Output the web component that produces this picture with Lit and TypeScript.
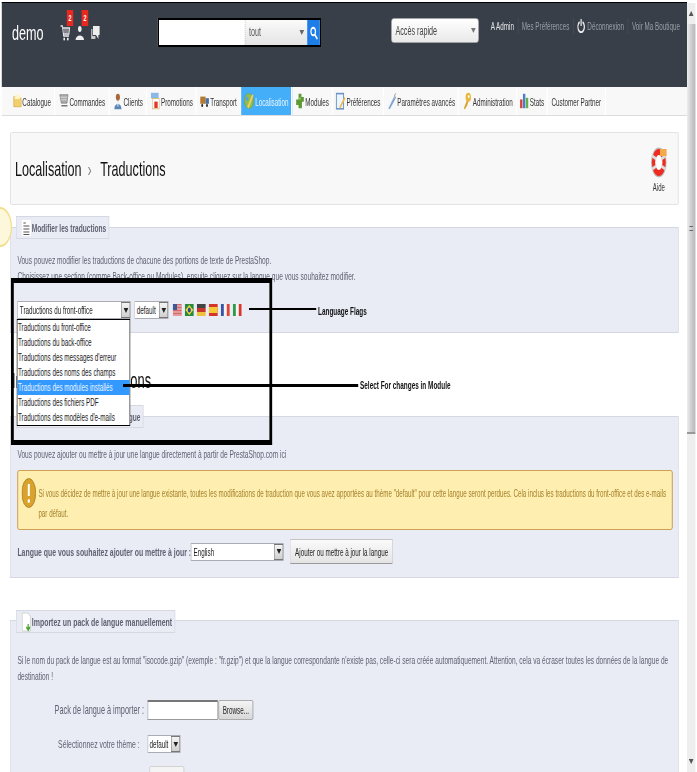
import { LitElement, html, css, svg } from "lit";
import { customElement } from "lit/decorators.js";

const I = (w: number, h: number, body: unknown, k = 1) =>
  html`<svg class="ic" width=${w * k} height=${h * k} viewBox="0 0 ${w} ${h}">${body}</svg>`;

const menu = [
  { t: "Catalogue", w: 75, i: I(17, 16, svg`<path d="M1 3h6l2 2h7v10H1z" fill="#f3cf6b" stroke="#cfa23c"/><rect x="3" y="1" width="10" height="5" fill="#fff4c4"/>`, 0.85) },
  { t: "Commandes", w: 91, i: I(20, 18, svg`<path d="M2 2h16l-2 10H5z" fill="#aaa" stroke="#777"/><path d="M5 14h12v2H5z" fill="#777"/><path d="M3 5h14M4 8h12" stroke="#eee"/>`, 0.85) },
  { t: "Clients", w: 62, i: I(20, 20, svg`<circle cx="10" cy="5" r="4" fill="#a8683a"/><path d="M3 19c0-8 14-8 14 0z" fill="#5b86b8"/><path d="M9 10h2v6H9z" fill="#e2e8f0"/>`, 0.85) },
  { t: "Promotions", w: 83, i: I(22, 22, svg`<rect x="2" y="1" width="16" height="7" fill="#8cb7e6"/><rect x="5" y="8" width="14" height="13" fill="#fff" stroke="#d8b060"/><rect x="9" y="12" width="7" height="8" fill="#e3352a"/>`, 0.8) },
  { t: "Transport", w: 74, i: I(20, 16, svg`<rect x="1" y="2" width="11" height="9" fill="#b57a2e"/><rect x="12" y="4" width="7" height="7" fill="#4a6fa8"/><circle cx="5" cy="13" r="2" fill="#333"/><circle cx="15" cy="13" r="2" fill="#333"/>`, 0.8) },
  { t: "Localisation", w: 85, on: true, i: I(24, 24, svg`<circle cx="12" cy="12" r="10" fill="#8fbf4d" stroke="#7a9a3a"/><path d="M8 20L19 3l3 2L11 22z" fill="#f2cf62"/><circle cx="8" cy="9" r="3" fill="#5ea0d8"/>`, 0.75) },
  { t: "Modules", w: 68, i: I(20, 20, svg`<path d="M7 1h6v4h5v6h-4v8H7v-4H2V8h5z" fill="#5d9a35"/><circle cx="10" cy="7" r="2" fill="#88c25c"/>`, 0.8) },
  { t: "Préférences", w: 85, i: I(22, 22, svg`<rect x="2" y="2" width="15" height="19" fill="#eef4fb" stroke="#6a94c8" stroke-width="2"/><path d="M8 19L19 6l2 2L10 21z" fill="#eab94a"/>`, 0.8) },
  { t: "Paramètres avancés", w: 125, i: I(22, 24, svg`<path d="M3 22l12-15 3 3L6 23z" fill="#7fa3d8"/><path d="M15 8c0-4 3-7 6-6l-3 3 3 3c-2 2-4 2-6 0z" fill="#aab5c4"/>`, 0.75) },
  { t: "Administration", w: 97, i: I(22, 24, svg`<circle cx="14" cy="7" r="6" fill="#eab83a"/><circle cx="15" cy="6" r="2" fill="#fff"/><path d="M11 11L4 22l3 1 2-3 2-1 3-6z" fill="#d9a228"/>`, 0.75) },
  { t: "Stats", w: 51, i: I(20, 20, svg`<rect x="1" y="8" width="5" height="11" fill="#d8423a"/><rect x="7" y="1" width="5" height="18" fill="#4a7fd0"/><rect x="13" y="6" width="5" height="13" fill="#64ae4c"/>`, 0.8) },
  { t: "Customer Partner", w: 97, i: null },
];

const flags = [
  svg`<rect width="15" height="12" fill="#d66"/><path d="M0 2h15M0 5h15M0 8h15M0 11h15" stroke="#eee"/><rect width="7" height="6" fill="#3c5a9a"/>`,
  svg`<rect width="15" height="12" fill="#2a8a3a"/><path d="M7.5 1L14 6l-6.5 5L1 6z" fill="#f2d83a"/><circle cx="7.5" cy="6" r="2.6" fill="#2a4a9a"/>`,
  svg`<rect width="15" height="4" fill="#444"/><rect y="4" width="15" height="4" fill="#c8352a"/><rect y="8" width="15" height="4" fill="#eec23a"/>`,
  svg`<rect width="15" height="12" fill="#d5342a"/><rect y="3" width="15" height="6" fill="#f6c93a"/>`,
  svg`<rect width="15" height="12" fill="#f4f4f4"/><rect width="5" height="12" fill="#3a55a5"/><rect x="10" width="5" height="12" fill="#e0443a"/>`,
  svg`<rect width="15" height="12" fill="#f4f4f4"/><rect width="5" height="12" fill="#2f9a48"/><rect x="10" width="5" height="12" fill="#d8342a"/>`,
];

const options = [
  "Traductions du front-office",
  "Traductions du back-office",
  "Traductions des messages d'erreur",
  "Traductions des noms des champs",
  "Traductions des modules installés",
  "Traductions des fichiers PDF",
  "Traductions des modèles d'e-mails",
];

const arrow = html`<span class="arr"><svg width="8" height="5" viewBox="0 0 8 5"><path d="M0 0h8L4 5z" fill="#222"/></svg></span>`;

@customElement("app-root")
export class AppRoot extends LitElement {
  static styles = css`
    :host { display: block; width: 697px; height: 772px; overflow: hidden; position: relative; background: #fff; }
    * { box-sizing: border-box; }
    .stage { width: 1162px; height: 772px; transform: scaleX(0.6); transform-origin: 0 0; display: flex; position: relative;
      font-family: "Liberation Sans", Arial, sans-serif; font-size: 10.5px; color: #5f6272; filter: blur(0.3px); }
    .main { width: 1145px; flex: none; }
    .ic { display: block; flex: none; }

    .top { margin: 2px 0 0 3px; height: 85px; border-top: 1px solid #000; background: #383f49; display: flex; align-items: flex-start; padding: 15px 0 0 17px; }
    .top > * { flex: none; }
    .demo { width: 80px; font-size: 21px; line-height: 30px; color: #fff; }
    .notif { width: 163px; display: flex; gap: 8px; padding-top: 7px; }
    .nt { position: relative; }
    .badge { position: absolute; top: -15px; left: 11px; width: 11px; height: 16px; background: #e8291f; color: #fff; font-size: 9px; font-weight: 700; text-align: center; line-height: 16px; }
    .search { width: 272px; height: 29px; border: 2px solid #000; display: flex; background: #fff; margin-right: 117px; }
    .search .q { width: 143px; }
    .search .in { width: 104px; padding: 0 5px 0 6px; font-size: 12px; line-height: 25px; display: flex; justify-content: space-between; align-items: center; color: #555; background: linear-gradient(#fafafa, #e4e4e4); border-left: 1px dotted #bbb; }
    .search .go { flex: 1; background: #1c7ee6; display: flex; align-items: center; justify-content: center; }
    .quick { width: 146px; height: 25px; border-radius: 4px; background: linear-gradient(#fff, #e9e9e9); border: 1px solid #bbb; display: flex; align-items: center; justify-content: space-between; padding: 0 4px 0 6px; font-size: 12px; color: #444; }
    .links { margin-left: 20px; display: flex; font-size: 10.5px; line-height: 16px; color: #9a9ea6; align-items: center; }
    .links span { padding: 0 6px; border-left: 1px solid #4c535d; display: flex; align-items: center; gap: 4px; white-space: nowrap; }
    .links span:first-child { border: 0; padding-left: 0; color: #e6e6e6; }

    .menu { margin-left: 3px; height: 29px; background: #f8f8f8; border-bottom: 1px solid #ddd; display: flex; padding-left: 14px; }
    .mi { height: 28px; flex: none; border-right: 2px solid #fff; display: flex; align-items: center; justify-content: center; gap: 1px; color: #333; font-size: 10.5px; white-space: nowrap; }
    .mi span { padding-top: 2px; }
    .mi.on { background: #45aef8; color: #e8f5ff; }

    .hdr { margin: 16px 14px 0 17px; height: 73px; background: #f8f8f8; border: 1px solid #ddd; border-radius: 2px; display: flex; justify-content: space-between; align-items: center; padding: 0 18px 0 7px; color: #111; }
    .crumb { font-size: 21px; display: flex; align-items: center; gap: 10px; }
    .crumb i { font-style: normal; color: #888; margin-right: 4px; }
    .aide { display: flex; flex-direction: column; align-items: center; font-size: 10px; color: #333; gap: 4px; margin-top: 2px; }

    .sec { margin: 22px 14px 0 17px; background: #e9ecf4; border: 1px solid #d5d8e2; padding: 0 11px; }
    .s1 { height: 106px; }
    .s2 { height: 162px; margin-top: 0; }
    .s3 { height: 240px; margin-top: 42px; }
    .leg { display: flex; width: fit-content; align-items: center; gap: 1px; height: 23px; margin: -12px 0 0 -2px; padding: 0 4px 0 8px; background: #e9ecf4; border: 1px solid #d5d8e2; font-size: 11px; font-weight: 700; color: #5f6272; }
    p { margin: 0; line-height: 16px; font-size: 11px; }
    .s1 p { margin-top: 13px; }
    .row1 { display: flex; align-items: center; margin-top: 17px; height: 18px; }
    .sel { display: flex; align-items: center; justify-content: space-between; background: #fff; border: 1px solid #abadb3; height: 18px; color: #222; padding-left: 3px; white-space: nowrap; }
    .arr { width: 15px; align-self: stretch; background: linear-gradient(#f4f4f4, #cfcfcf); border: 1px solid #777; display: flex; align-items: center; justify-content: center; flex: none; }
    .sel.a { width: 189px; }
    .sel.b { width: 57px; margin-left: 6px; }
    .flags { display: flex; gap: 5px; margin-left: 7px; }

    h2 { margin: 37px 0 24px 20px; height: 22px; font-size: 21.5px; line-height: 22px; font-weight: 400; color: #111; white-space: nowrap; }

    .s2 .leg { width: 212px; justify-content: flex-end; }
    .s2 p { margin-top: 18px; }
    .warn { margin-top: 8px; height: 60px; width: 1092px; background: #feeeb0; border: 1px solid #c58a33; border-radius: 3px; display: flex; color: #a5802a; font-size: 10.4px; line-height: 20px; padding: 13px 2px 0 6px; gap: 4px; }
    .warn svg { margin-top: -6px; }
    .row2 { display: flex; align-items: center; height: 25px; margin-top: 9px; font-weight: 700; font-size: 11.5px; white-space: nowrap; }
    .row2 .sel { width: 155px; margin-left: 0; font-weight: 400; font-size: 10.5px; height: 18px; }
    .btn { height: 25px; background: linear-gradient(#fafafa, #e4e4e4); border: 1px solid #c4c4c4; border-bottom-color: #999; border-radius: 2px; color: #222; font-weight: 400; font-size: 10.5px; display: flex; align-items: center; justify-content: center; }
    .row2 .btn { width: 172px; margin-left: 10px; }

    .s3 p { margin-top: 20px; line-height: 15.5px; }
    .s3 .leg { margin-top: -11px; font-size: 11.6px; }
    .row3 { display: flex; align-items: center; font-size: 12.2px; margin-top: 16px; height: 20px; }
    .row3 .lb { width: 217px; flex: none; text-align: right; padding-right: 6px; white-space: nowrap; }
    .row3 .lb.n { padding-right: 13px; font-size: 11.5px; }
    .file { width: 117px; height: 20px; background: #fff; border: 1px solid #999; border-top: 2px solid #777; }
    .browse { width: 58px; height: 20px; margin-left: 1px; background: linear-gradient(#f4f4f4, #d8d8d8); border: 1px solid #999; border-radius: 2px; color: #222; font-size: 10.5px; display: flex; align-items: center; justify-content: center; }
    .sel.c { width: 55px; padding-left: 2px; font-size: 10.5px; }
    .r2 { margin-top: 15px; height: 18px; }
    .r3 { margin-top: 13px; padding-left: 220px; }
    .r3 div { width: 58px; height: 30px; background: #f4f4f4; border: 1px solid #ccc; border-radius: 2px; }

    .bar { width: 14px; flex: none; background: #eee; display: flex; flex-direction: column; margin-top: 3px; height: 769px; }
    .bar .end { height: 21px; display: flex; align-items: center; justify-content: center; }
    .thumb { height: 410px; background: linear-gradient(90deg, #eee, #c8c8cb 60%, #b8b8bb); border-bottom: 2px solid #999; display: flex; align-items: center; justify-content: center; }
    .grip { width: 6px; height: 5px; border-top: 1px solid #666; border-bottom: 1px solid #666; }
    .sp { flex: 1; }

    .halo { position: absolute; left: -20px; top: 207px; width: 40px; height: 40px; border-radius: 50%; background: #fdf8dc; border: 2px solid #f3dd8a; }
    .box { position: absolute; left: 18px; top: 278px; width: 436px; height: 167px; border: 5px solid #000; }
    .drop { position: absolute; left: 28px; top: 319px; width: 189px; background: #fff; border: 1px solid #000; padding: 0; color: #222; }
    .drop div { height: 15px; line-height: 15px; padding-left: 1px; white-space: nowrap; }
    .drop .hit { background: #3399ff; color: #e9f4ff; }
    .ln { position: absolute; background: #000; }
    .ln.a { left: 415px; top: 308px; width: 112px; height: 2px; }
    .ln.b { left: 205px; top: 384px; width: 392px; height: 3px; }
    .note { position: absolute; font-weight: 700; color: #111; font-size: 10.7px; white-space: nowrap; line-height: 14px; }
    .note.a { left: 530px; top: 304px; }
    .note.b { left: 600px; top: 378px; }
  `;

  render() {
    return html`<div class="stage">
      <div class="main">
        <div class="top">
          <div class="demo">demo</div>
          <div class="notif">
            <div class="nt">${I(17, 16, svg`<path d="M1 1h3l2 10h9M5 3h11l-1 6H6" fill="none" stroke="#eee" stroke-width="1.4"/><path d="M6 5h9M6 7h9" stroke="#eee"/><circle cx="7" cy="14" r="1.5" fill="#eee"/><circle cx="13" cy="14" r="1.5" fill="#eee"/>`)}<span class="badge">2</span></div>
            <div class="nt">${I(17, 16, svg`<circle cx="8" cy="4" r="3" fill="#eee"/><path d="M1 15c0-6 14-6 14 0z" fill="#eee"/>`)}<span class="badge">2</span></div>
            <div class="nt">${I(17, 16, svg`<path d="M5 1h11v9h-2v4l-4-4H5z" fill="#eee"/><path d="M2 4h2v7h5v3H2z" fill="#ccc"/>`)}</div>
          </div>
          <div class="search">
            <div class="q"></div>
            <div class="in"><span>tout</span><svg width="8" height="5" viewBox="0 0 10 6"><path d="M0 0h10L5 6z" fill="#666"/></svg></div>
            <div class="go"><svg width="14" height="14" viewBox="0 0 14 14"><circle cx="6" cy="5.5" r="3.8" fill="none" stroke="#fff" stroke-width="2"/><path d="M8.5 8.5L13 13" stroke="#fff" stroke-width="2.4"/></svg></div>
          </div>
          <div class="quick"><span>Accès rapide</span><svg width="8" height="5" viewBox="0 0 10 6"><path d="M0 0h10L5 6z" fill="#777"/></svg></div>
          <div class="links">
            <span>A Admin</span>
            <span>Mes Préférences</span>
            <span><svg width="13" height="14" viewBox="0 0 13 14"><path d="M4 3a5.4 5.4 0 1 0 5 0" fill="none" stroke="#eee" stroke-width="2"/><path d="M6.5 0v7" stroke="#eee" stroke-width="2"/></svg>Déconnexion</span>
            <span>Voir Ma Boutique</span>
          </div>
        </div>
        <div class="menu">
          ${menu.map((m) => html`<div class="mi ${m.on ? "on" : ""}" style="width:${m.w}px">${m.i}<span>${m.t}</span></div>`)}
        </div>
        <div class="hdr">
          <div class="crumb"><span>Localisation</span><i>›</i><span>Traductions</span></div>
          <div class="aide">
            <svg width="28" height="31" viewBox="0 0 28 31"><ellipse cx="14" cy="15.5" rx="13" ry="15" fill="#bbb"/><ellipse cx="14" cy="15.5" rx="11.5" ry="13.5" fill="#ee2c22"/><ellipse cx="14" cy="15.5" rx="6" ry="7.5" fill="#fff"/><path d="M3 9l7 3M25 9l-7 3M3 22l7-3M25 22l-7-3" stroke="#ddd" stroke-width="3"/><rect x="16" y="2" width="11" height="7" fill="#f4a94a"/></svg>
            <span>Aide</span>
          </div>
        </div>

        <div class="sec s1">
          <div class="leg">${I(16, 18, svg`<rect x="0" y="1" width="16" height="16" fill="#fff"/><path d="M3 4h4M3 7h10M3 10h10M3 13h10M3 15.5h10" stroke="#555" stroke-width="1.2"/>`)}<span>Modifier les traductions</span></div>
          <p>Vous pouvez modifier les traductions de chacune des portions de texte de PrestaShop.<br />Choisissez une section (comme Back-office ou Modules), ensuite cliquez sur la langue que vous souhaitez modifier.</p>
          <div class="row1">
            <div class="sel a"><span>Traductions du front-office</span>${arrow}</div>
            <div class="sel b"><span>default</span>${arrow}</div>
            <div class="flags">${flags.map((f) => html`<svg width="15" height="12" viewBox="0 0 15 12">${f}</svg>`)}</div>
          </div>
        </div>

        <h2>Importer des traductions</h2>

        <div class="sec s2">
          <div class="leg"><span>Ajouter / mettre à jour une langue</span></div>
          <p>Vous pouvez ajouter ou mettre à jour une langue directement à partir de PrestaShop.com ici</p>
          <div class="warn">
            <svg width="24" height="30" viewBox="0 0 24 30" style="flex:none"><ellipse cx="12" cy="15" rx="11.5" ry="14.5" fill="#d9a22c" stroke="#a87a1c"/><path d="M12 6v12" stroke="#fff" stroke-width="3.4"/><circle cx="12" cy="23" r="2" fill="#fff"/></svg>
            <div>Si vous décidez de mettre à jour une langue existante, toutes les modifications de traduction que vous avez apportées au thème "default" pour cette langue seront perdues. Cela inclus les traductions du front-office et des e-mails par défaut.</div>
          </div>
          <div class="row2">
            <span>Langue que vous souhaitez ajouter ou mettre à jour :</span>
            <div class="sel"><span>English</span>${arrow}</div>
            <div class="btn">Ajouter ou mettre à jour la langue</div>
          </div>
        </div>

        <div class="sec s3">
          <div class="leg">${I(16, 20, svg`<path d="M1 1h10l4 4v14H1z" fill="#fff" stroke="#ccc"/><path d="M11 12v5m-3-2l3 3 3-3" stroke="#4aa52e" stroke-width="2" fill="none"/>`)}<span>Importez un pack de langue manuellement</span></div>
          <p>Si le nom du pack de langue est au format "isocode.gzip" (exemple : "fr.gzip") et que la langue correspondante n'existe pas, celle-ci sera créée automatiquement. Attention, cela va écraser toutes les données de la langue de destination !</p>
          <div class="row3"><div class="lb">Pack de langue à importer :</div><div class="file"></div><div class="browse">Browse...</div></div>
          <div class="row3 r2"><div class="lb n">Sélectionnez votre thème :</div><div class="sel c"><span>default</span>${arrow}</div></div>
          <div class="r3"><div></div></div>
        </div>
      </div>

      <div class="bar">
        <div class="end"><svg width="8" height="5" viewBox="0 0 8 5"><path d="M4 0l4 5H0z" fill="#555"/></svg></div>
        <div class="thumb"><div class="grip"></div></div>
        <div class="sp"></div>
        <div class="end"><svg width="8" height="5" viewBox="0 0 8 5"><path d="M0 0h8L4 5z" fill="#555"/></svg></div>
      </div>

      <div class="halo"></div>
      <div class="drop">${options.map((o, i) => html`<div class=${i === 4 ? "hit" : ""}>${o}</div>`)}</div>
      <div class="box"></div>
      <div class="ln a"></div>
      <div class="ln b"></div>
      <div class="note a">Language Flags</div>
      <div class="note b">Select For changes in Module</div>
    </div>`;
  }
}
